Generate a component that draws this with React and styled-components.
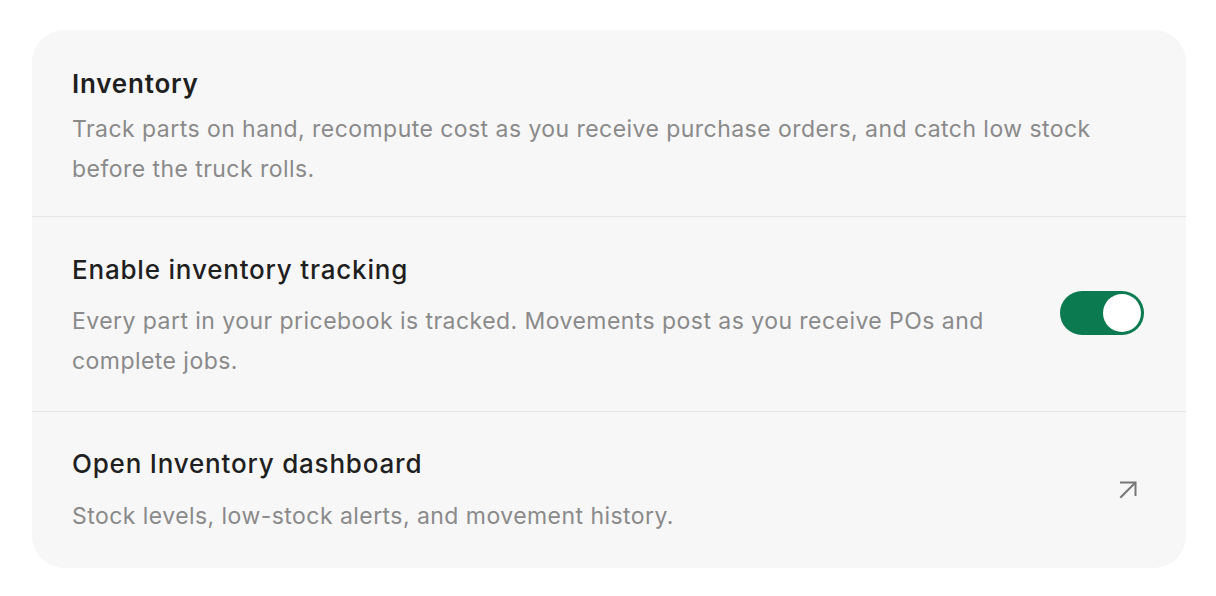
import React, { useState } from "react";
import styled, { createGlobalStyle } from "styled-components";

const Global = createGlobalStyle`
  body {
    margin: 0;
    background: #ffffff;
    font-family: Inter, "Noto Sans", sans-serif;
    -webkit-font-smoothing: antialiased;
  }
`

const Page = styled.div`
  padding: 30px 30px 28px 32px;
`

const Card = styled.div`
  background: #f7f7f7;
  border-radius: 32px;
  overflow: hidden;
`

const Section = styled.div`
  display: flex;
  align-items: center;
  gap: 40px;
  padding: ${p => p.$pad || "36px 40px 32px"};
  & + & {
    border-top: 1.5px solid #e6e6e6;
  }
`

const Body = styled.div`
  flex: 1;
  min-width: 0;
`

const Title = styled.div`
  font-size: 26px;
  line-height: 36px;
  font-weight: ${p => (p.$strong ? 600 : 500)};
  color: #1f1f1f;
  letter-spacing: 0.8px;
`

const Desc = styled.div`
  margin-top: ${p => p.$gap || "13px"};
  font-size: 23px;
  line-height: 40px;
  letter-spacing: 0.45px;
  color: #8a8a8a;
  max-width: ${p => p.$max || "none"};
`

const Switch = styled.button`
  flex: none;
  appearance: none;
  border: none;
  cursor: pointer;
  width: 84px;
  height: 44px;
  border-radius: 22px;
  padding: 3px;
  margin: 0 2px 7px 0;
  display: flex;
  justify-content: ${p => (p.$on ? "flex-end" : "flex-start")};
  background: ${p => (p.$on ? "#0b7a50" : "#cfcfcf")};
`

const Knob = styled.span`
  width: 38px;
  height: 38px;
  border-radius: 50%;
  background: #ffffff;
`

const LinkIcon = styled.div`
  flex: none;
  width: 18px;
  height: 18px;
  margin: 0 9px 2px 0;
  color: #777777;
  display: flex;
`

export default function App() {
  const [on, setOn] = useState(true);
  return (
    <>
      <Global />
      <Page>
        <Card>
          <Section $pad="36px 40px 27px">
            <Body>
              <Title $strong>Inventory</Title>
              <Desc $gap="7px" $max="1040px">
                Track parts on hand, recompute cost as you receive purchase orders, and catch low stock
                before the truck rolls.
              </Desc>
            </Body>
          </Section>
          <Section $pad="35px 40px 30px">
            <Body>
              <Title>Enable inventory tracking</Title>
              <Desc $max="960px">
                Every part in your pricebook is tracked. Movements post as you receive POs and complete jobs.
              </Desc>
            </Body>
            <Switch $on={on} aria-label="Enable inventory tracking" onClick={() => setOn(!on)}>
              <Knob />
            </Switch>
          </Section>
          <Section $pad="34px 40px 32px">
            <Body>
              <Title>Open Inventory dashboard</Title>
              <Desc $gap="14px">Stock levels, low-stock alerts, and movement history.</Desc>
            </Body>
            <LinkIcon>
              <svg width="18" height="18" viewBox="0 0 18 18" fill="none" stroke="currentColor" strokeWidth="2" strokeLinecap="square">
                <path d="M2 16 L16 2" />
                <path d="M2 1.5 H16.5 V14" />
              </svg>
            </LinkIcon>
          </Section>
        </Card>
      </Page>
    </>
  )
}
